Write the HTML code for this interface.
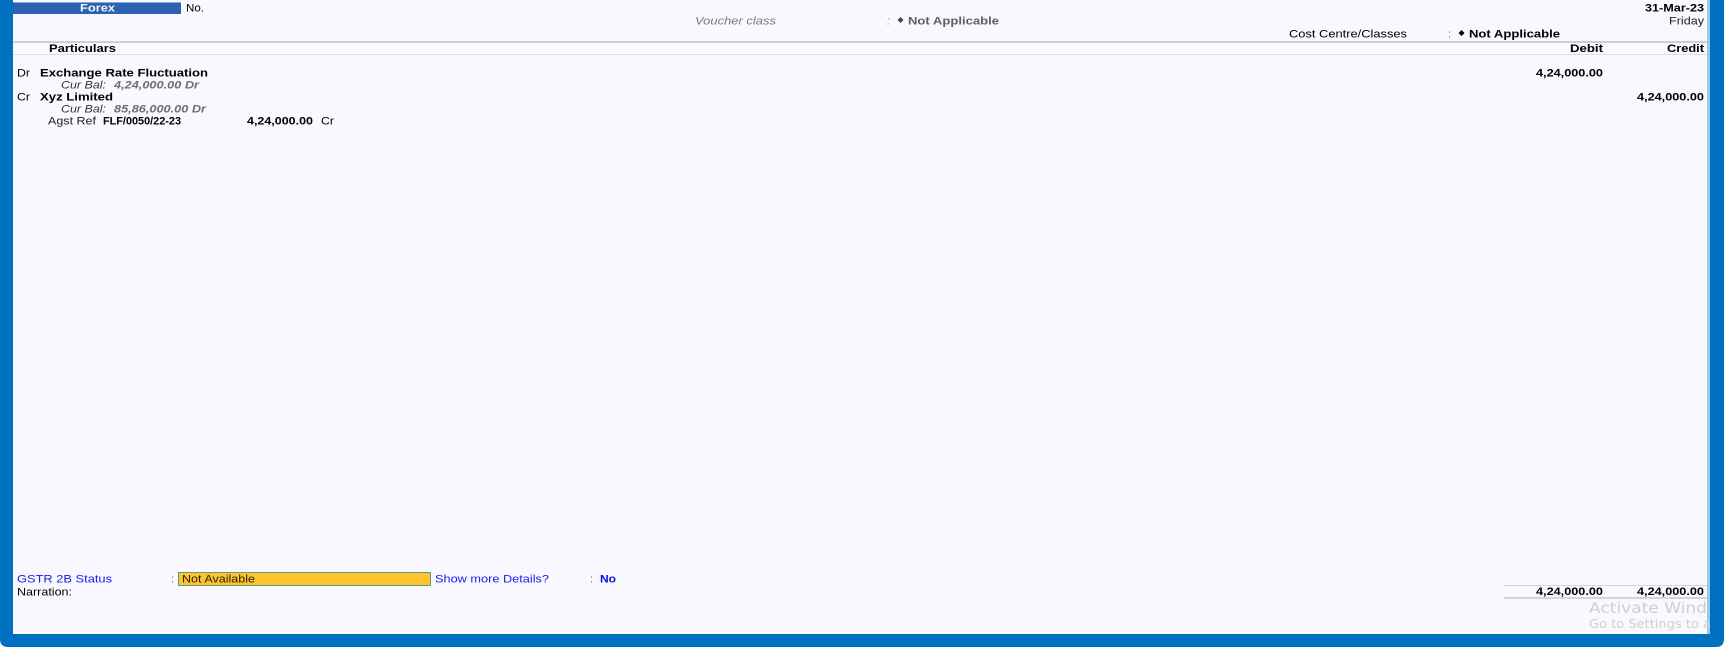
<!DOCTYPE html>
<html>
<head>
<meta charset="utf-8">
<style>
html,body{margin:0;padding:0;width:1724px;height:647px;overflow:hidden;background:#fff}
svg{display:block}
text{font-family:"Liberation Sans",sans-serif;font-size:11px;fill:#000}
.b{font-weight:bold}
.i{font-style:italic;fill:#666}
.bl{fill:#1a1ae8}
.w{font-family:"DejaVu Sans",sans-serif;fill:#cfcfd2}
</style>
</head>
<body>
<svg width="1724" height="647" viewBox="0 0 1724 647" xmlns="http://www.w3.org/2000/svg">
<defs>
<filter id="s" x="-2%" y="-2%" width="104%" height="104%"><feGaussianBlur stdDeviation="0.3"/></filter>
<clipPath id="c"><rect x="13" y="0" width="1697" height="634"/></clipPath>
</defs>
<path d="M0 0H1724V639Q1724 647 1716 647H8Q0 647 0 639Z" fill="#0070c0"/>
<rect x="13" y="0" width="1694" height="634" fill="#faf8ff"/>
<rect x="1707" y="0" width="3" height="634" fill="#9cc8ea"/>
<rect x="13" y="2" width="168" height="1" fill="#8fa9d6"/>
<rect x="13" y="3" width="168" height="11" fill="#2a62b0"/>
<rect x="13" y="41" width="1694" height="2" fill="#cfcdd2"/>
<rect x="13" y="54" width="1694" height="1" fill="#dedce2"/>
<rect x="1504" y="585" width="203" height="1" fill="#d6d4da"/>
<rect x="1504" y="597" width="203" height="2" fill="#d6d4da"/>
<rect x="178.5" y="572.5" width="252" height="13" fill="#ffc42c" stroke="#5a9a8a"/>
<g filter="url(#s)">
<text x="80" y="11.5" class="b" style="fill:#f2f5fb" textLength="35" lengthAdjust="spacingAndGlyphs">Forex</text>
<text x="186" y="11.5" textLength="18" lengthAdjust="spacingAndGlyphs">No.</text>
<text x="695" y="24.5" class="i" style="fill:#77777c" textLength="81" lengthAdjust="spacingAndGlyphs">Voucher class</text>
<text x="887" y="24.5" class="i" style="fill:#808085">:</text>
<path d="M900.5 17l3 3-3 3-3-3z" fill="#444"/>
<text x="908" y="24.5" class="b" style="fill:#5e5e64" textLength="91" lengthAdjust="spacingAndGlyphs">Not Applicable</text>
<text x="1289" y="37.5" textLength="118" lengthAdjust="spacingAndGlyphs">Cost Centre/Classes</text>
<text x="1448" y="37.5" style="fill:#666">:</text>
<path d="M1461.5 30l3 3-3 3-3-3z" fill="#000"/>
<text x="1469" y="37.5" class="b" textLength="91" lengthAdjust="spacingAndGlyphs">Not Applicable</text>
<text x="1645" y="11.5" class="b" textLength="59" lengthAdjust="spacingAndGlyphs">31-Mar-23</text>
<text x="1669" y="24.5" style="fill:#222" textLength="35" lengthAdjust="spacingAndGlyphs">Friday</text>
<text x="49" y="52" class="b" textLength="67" lengthAdjust="spacingAndGlyphs">Particulars</text>
<text x="1570" y="52" class="b" textLength="33" lengthAdjust="spacingAndGlyphs">Debit</text>
<text x="1667" y="52" class="b" textLength="37" lengthAdjust="spacingAndGlyphs">Credit</text>
<text x="17" y="76.5" textLength="13" lengthAdjust="spacingAndGlyphs">Dr</text>
<text x="40" y="76.5" class="b" textLength="168" lengthAdjust="spacingAndGlyphs">Exchange Rate Fluctuation</text>
<text x="1536" y="76.5" class="b" textLength="67" lengthAdjust="spacingAndGlyphs">4,24,000.00</text>
<text x="61" y="88.5" class="i" style="fill:#334" textLength="45" lengthAdjust="spacingAndGlyphs">Cur Bal:</text>
<text x="114" y="88.5" class="i" style="font-weight:bold;fill:#6e6e74" textLength="85" lengthAdjust="spacingAndGlyphs">4,24,000.00 Dr</text>
<text x="17" y="100.5" textLength="13" lengthAdjust="spacingAndGlyphs">Cr</text>
<text x="40" y="100.5" class="b" textLength="73" lengthAdjust="spacingAndGlyphs">Xyz Limited</text>
<text x="1637" y="100.5" class="b" textLength="67" lengthAdjust="spacingAndGlyphs">4,24,000.00</text>
<text x="61" y="112.5" class="i" style="fill:#334" textLength="45" lengthAdjust="spacingAndGlyphs">Cur Bal:</text>
<text x="114" y="112.5" class="i" style="font-weight:bold;fill:#6e6e74" textLength="92" lengthAdjust="spacingAndGlyphs">85,86,000.00 Dr</text>
<text x="48" y="124.5" style="fill:#222" textLength="48" lengthAdjust="spacingAndGlyphs">Agst Ref</text>
<text x="103" y="124.5" class="b" textLength="78" lengthAdjust="spacingAndGlyphs">FLF/0050/22-23</text>
<text x="247" y="124.5" class="b" textLength="66" lengthAdjust="spacingAndGlyphs">4,24,000.00</text>
<text x="321" y="124.5" textLength="13" lengthAdjust="spacingAndGlyphs">Cr</text>
<text x="17" y="582.5" class="bl" textLength="95" lengthAdjust="spacingAndGlyphs">GSTR 2B Status</text>
<text x="171" y="582.5" style="fill:#666">:</text>
<text x="182" y="582.5" style="fill:#2a2410" textLength="73" lengthAdjust="spacingAndGlyphs">Not Available</text>
<text x="435" y="582.5" class="bl" textLength="114" lengthAdjust="spacingAndGlyphs">Show more Details?</text>
<text x="590" y="582.5" style="fill:#666">:</text>
<text x="600" y="582.5" class="b" style="fill:#0808e0" textLength="16" lengthAdjust="spacingAndGlyphs">No</text>
<text x="17" y="595.5" textLength="55" lengthAdjust="spacingAndGlyphs">Narration:</text>
<text x="1536" y="595" class="b" textLength="67" lengthAdjust="spacingAndGlyphs">4,24,000.00</text>
<text x="1637" y="595" class="b" textLength="67" lengthAdjust="spacingAndGlyphs">4,24,000.00</text>
<g clip-path="url(#c)">
<text x="1589" y="613" class="w" style="font-size:15px" textLength="118" lengthAdjust="spacingAndGlyphs">Activate Wind</text>
<text x="1589" y="628" class="w" style="font-size:12px" textLength="122" lengthAdjust="spacingAndGlyphs">Go to Settings to a</text>
</g>
</g>
</svg>
</body>
</html>
